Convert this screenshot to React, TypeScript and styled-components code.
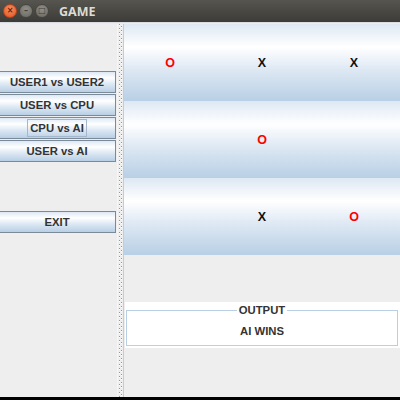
import React from "react";
import styled, { createGlobalStyle } from "styled-components";

const Global = createGlobalStyle`
  html, body { margin: 0; padding: 0; background: #000; }
  body { width: 400px; height: 400px; overflow: hidden; }
`;

const oceanGradient = `linear-gradient(
  to bottom,
  #dde8f3 0%,
  #ffffff 30%,
  #dde8f3 60%,
  #b8cfe5 100%
)`;

const uiFont = `"Liberation Sans", "DejaVu Sans", sans-serif`;

const Window = styled.div`
  width: 400px;
  height: 397px;
  display: flex;
  flex-direction: column;
  background: #eeeeee;
  font-family: ${uiFont};
  overflow: hidden;
`;

const TitleBar = styled.div`
  height: 22px;
  flex: none;
  display: flex;
  align-items: center;
  padding-left: 3px;
  gap: 2px;
  background: linear-gradient(to bottom, #56554f, #3c3b37);
`;

const WinButton = styled.span<{ $close?: boolean }>`
  width: 14px;
  height: 14px;
  border-radius: 50%;
  box-sizing: border-box;
  display: inline-flex;
  align-items: center;
  justify-content: center;
  background: ${(p) =>
    p.$close
      ? "radial-gradient(circle at 50% 35%, #f8905f, #e4521f)"
      : "radial-gradient(circle at 50% 35%, #8f8e88, #67665f)"};
  border: 1px solid ${(p) => (p.$close ? "#b7441c" : "#46453f")};
  font-family: "DejaVu Sans", sans-serif;
  font-size: 8px;
  font-weight: bold;
  line-height: 1;
  color: ${(p) => (p.$close ? "#6a2008" : "#3e3d38")};
`;

const Title = styled.span`
  margin-left: 8px;
  color: #dfdbd2;
  font-family: "Noto Sans", "DejaVu Sans", sans-serif;
  font-weight: bold;
  font-size: 12.5px;
`;

const TopEdge = styled.div`
  height: 2px;
  flex: none;
  background: linear-gradient(to bottom, #cfd3d8, #f4f4f4);
`;

const Body = styled.div`
  flex: 1;
  display: flex;
  min-height: 0;
`;

const LeftPanel = styled.div`
  width: 117px;
  flex: none;
  display: flex;
  flex-direction: column;
  padding-top: 47px;
  box-sizing: border-box;
`;

const MenuGroup = styled.div`
  display: flex;
  flex-direction: column;
  gap: 1px;
  margin-bottom: 49px;
`;

const MenuButton = styled.button`
  margin: 0 0 0 -2px;
  width: 118px;
  height: 22px;
  box-sizing: border-box;
  border: 1px solid #7a8a99;
  border-radius: 0;
  background: ${oceanGradient};
  font-family: ${uiFont};
  font-weight: bold;
  font-size: 11.3px;
  color: #333333;
  padding: 0;
  display: flex;
  align-items: center;
  justify-content: center;
  cursor: pointer;
`;

const Focus = styled.span<{ $on?: boolean }>`
  padding: 2px 2px;
  border: 1px solid ${(p) => (p.$on ? "#a3b8cc" : "transparent")};
`;

const Divider = styled.div`
  width: 7px;
  flex: none;
  box-sizing: border-box;
  border-left: 1px solid #f6f6f6;
  border-right: 1px solid #b8cfe5;
  background-color: #eeeeee;
  background-image:
    linear-gradient(to bottom, #8e98a3 0 1px, #ffffff 1px 2px, transparent 2px),
    linear-gradient(to bottom, transparent 0 2px, #8e98a3 2px 3px, #ffffff 3px 4px);
  background-size: 1px 4px, 1px 4px;
  background-position: 1px 0, 3px 0;
  background-repeat: repeat-y;
`;

const RightPanel = styled.div`
  flex: 1;
  display: flex;
  flex-direction: column;
`;

const Board = styled.div`
  display: grid;
  grid-template-columns: repeat(3, 1fr);
  grid-template-rows: repeat(3, 77px);
`;

const Cell = styled.div<{ $mark?: string }>`
  background: ${oceanGradient};
  display: flex;
  align-items: center;
  justify-content: center;
  font-weight: bold;
  font-size: 12.5px;
  color: ${(p) => (p.$mark === "O" ? "#ff0000" : "#111111")};
`;

const Gap = styled.div`
  height: 47px;
`;

const OutputPanel = styled.div`
  background: #ffffff;
  height: 46px;
  padding: 1px 2px 2px 1px;
  box-sizing: border-box;
  margin-left: 1px;
`;

const Fieldset = styled.fieldset`
  margin: 0;
  height: 100%;
  box-sizing: border-box;
  border: 1px solid #b8cfe5;
  padding: 0;
  display: flex;
  justify-content: center;
`;

const Legend = styled.legend`
  margin: 0 auto;
  padding: 0 2px;
  font-weight: bold;
  font-size: 11.3px;
  color: #333333;
  line-height: 14px;
`;

const Result = styled.div`
  font-weight: bold;
  font-size: 11.3px;
  color: #333333;
  margin-top: 8px;
`;

const board = ["O", "X", "X", "", "O", "", "", "X", "O"];

export default function App() {
  return (
    <>
      <Global />
      <Window>
        <TitleBar>
          <WinButton $close>×</WinButton>
          <WinButton>–</WinButton>
          <WinButton>□</WinButton>
          <Title>GAME</Title>
        </TitleBar>
        <TopEdge />
        <Body>
          <LeftPanel>
            <MenuGroup>
              <MenuButton><Focus>USER1 vs USER2</Focus></MenuButton>
              <MenuButton><Focus>USER vs CPU</Focus></MenuButton>
              <MenuButton><Focus $on>CPU vs AI</Focus></MenuButton>
              <MenuButton><Focus>USER vs AI</Focus></MenuButton>
            </MenuGroup>
            <MenuButton><Focus>EXIT</Focus></MenuButton>
          </LeftPanel>
          <Divider />
          <RightPanel>
            <Board>
              {board.map((m, i) => (
                <Cell key={i} $mark={m}>{m}</Cell>
              ))}
            </Board>
            <Gap />
            <OutputPanel>
              <Fieldset>
                <Legend>OUTPUT</Legend>
                <Result>AI WINS</Result>
              </Fieldset>
            </OutputPanel>
          </RightPanel>
        </Body>
      </Window>
    </>
  );
}
